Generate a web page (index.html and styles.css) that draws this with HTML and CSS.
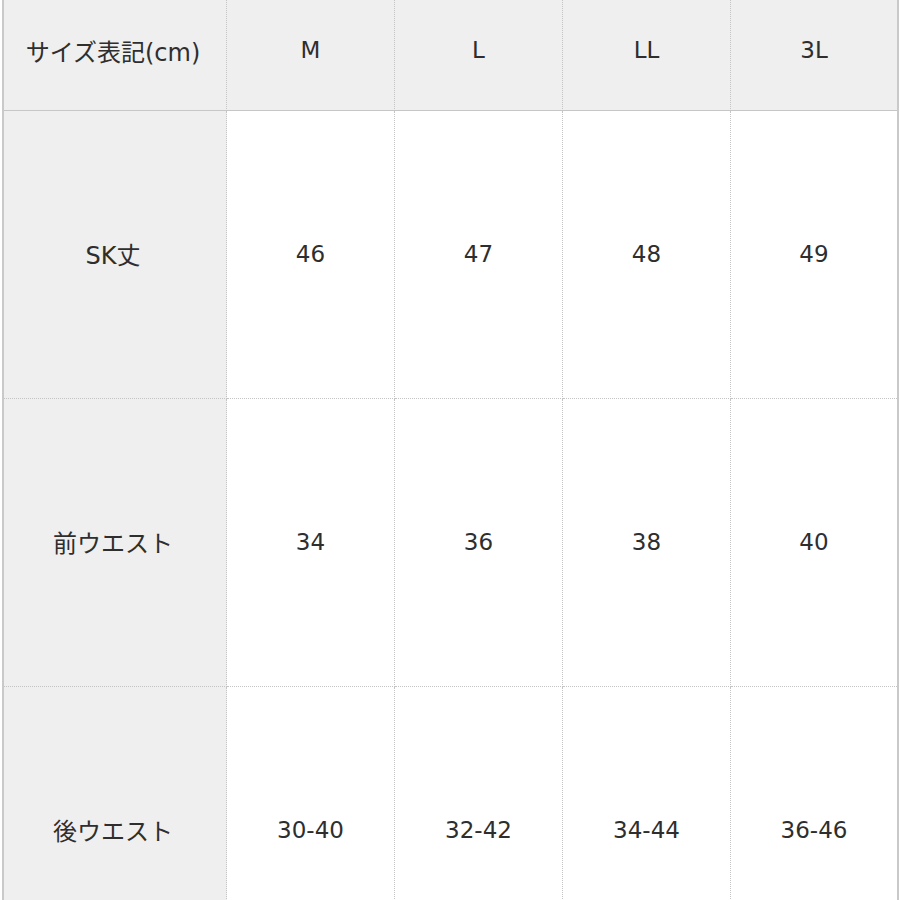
FILE: index.html
```html
<!DOCTYPE html>
<html lang="ja">
<head>
<meta charset="utf-8">
<link rel="stylesheet" href="styles.css">
</head>
<body>
<div class="table">
  <div class="cell head label">サイズ表記(cm)</div>
  <div class="cell head">M</div>
  <div class="cell head">L</div>
  <div class="cell head">LL</div>
  <div class="cell head last">3L</div>

  <div class="cell label">SK丈</div>
  <div class="cell">46</div>
  <div class="cell">47</div>
  <div class="cell">48</div>
  <div class="cell last">49</div>

  <div class="cell label">前ウエスト</div>
  <div class="cell">34</div>
  <div class="cell">36</div>
  <div class="cell">38</div>
  <div class="cell last">40</div>

  <div class="cell label">後ウエスト</div>
  <div class="cell">30-40</div>
  <div class="cell">32-42</div>
  <div class="cell">34-44</div>
  <div class="cell last">36-46</div>
</div>
</body>
</html>
```

FILE: styles.css
```css
html, body {
  margin: 0;
  padding: 0;
  background: #ffffff;
}
body {
  font-family: "DejaVu Sans", "Noto Sans CJK JP", sans-serif;
  font-size: 23px;
  color: #2e2e2e;
}
.table {
  margin-left: 2px;
  width: 893px;
  border-left: 2px solid #c9c9c9;
  border-right: 2px solid #c9c9c9;
  display: grid;
  grid-template-columns: 223px 168px 168px 168px 166px;
  grid-template-rows: 111px 288px 288px 288px;
}
.cell {
  box-sizing: border-box;
  display: flex;
  align-items: center;
  justify-content: center;
  background: #ffffff;
  border-right: 1px dotted #c4c4c4;
  border-bottom: 1px dotted #c4c4c4;
  padding-bottom: 2px;
}
.cell.last {
  border-right: none;
}
.cell.head {
  background: #efefef;
  border-bottom: 1px solid #c6c6c6;
  padding-bottom: 10px;
}
.cell.label {
  background: #efefef;
  font-size: 24px;
  padding-right: 4px;
}
```
